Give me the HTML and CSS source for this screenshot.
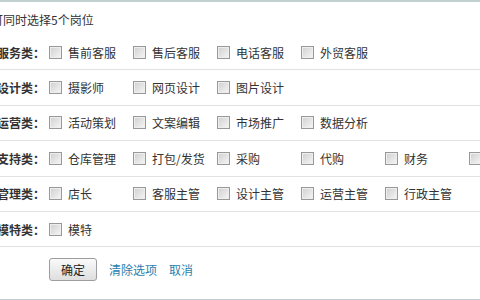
FILE: index.html
```html
<!DOCTYPE html>
<html lang="zh-CN">
<head>
	<meta charset="UTF-8">
	<title>选择岗位</title>
	<link rel="stylesheet" href="styles.css">
</head>
<body>
	<div id="box">
		<p class="tip">可同时选择5个岗位</p>
		<ul class="rows">
			<li>
				<span class="cat">服务类：</span>
				<label><input type="checkbox">售前客服</label>
				<label><input type="checkbox">售后客服</label>
				<label><input type="checkbox">电话客服</label>
				<label><input type="checkbox">外贸客服</label>
			</li>
			<li>
				<span class="cat">设计类：</span>
				<label><input type="checkbox">摄影师</label>
				<label><input type="checkbox">网页设计</label>
				<label><input type="checkbox">图片设计</label>
			</li>
			<li>
				<span class="cat">运营类：</span>
				<label><input type="checkbox">活动策划</label>
				<label><input type="checkbox">文案编辑</label>
				<label><input type="checkbox">市场推广</label>
				<label><input type="checkbox">数据分析</label>
			</li>
			<li>
				<span class="cat">支持类：</span>
				<label><input type="checkbox">仓库管理</label>
				<label><input type="checkbox">打包/发货</label>
				<label><input type="checkbox">采购</label>
				<label><input type="checkbox">代购</label>
				<label><input type="checkbox">财务</label>
				<label><input type="checkbox">其他</label>
			</li>
			<li>
				<span class="cat">管理类：</span>
				<label><input type="checkbox">店长</label>
				<label><input type="checkbox">客服主管</label>
				<label><input type="checkbox">设计主管</label>
				<label><input type="checkbox">运营主管</label>
				<label><input type="checkbox">行政主管</label>
			</li>
			<li>
				<span class="cat">模特类：</span>
				<label><input type="checkbox">模特</label>
			</li>
		</ul>
		<div class="ops">
			<input class="btn" type="button" value="确定">
			<a href="###">清除选项</a>
			<a href="###">取消</a>
		</div>
	</div>
</body>
</html>
```

FILE: styles.css
```css
*{
	margin: 0;
	padding: 0;
}
ul,li{
	list-style: none;
}
html,body{
	width: 480px;
	height: 300px;
	overflow: hidden;
	background-color: #fff;
}
body{
	font-family: "Noto Sans CJK SC", "Liberation Sans", sans-serif;
	font-size: 12px;
	color: #333;
}
#box{
	height: 297px;
	border-top: 2px solid #c3d0d0;
	border-bottom: 1px solid #c2cad6;
	overflow: hidden;
}
.tip{
	height: 33px;
	line-height: 36px;
	margin-left: -9px;
	white-space: nowrap;
}
.rows li{
	height: 34.4px;
	border-bottom: 1px solid #e2e2e2;
	display: flex;
	align-items: center;
	white-space: nowrap;
}
.cat{
	width: 52px;
	flex: none;
	margin-left: -3px;
	font-weight: bold;
}
.rows label{
	width: 84px;
	flex: none;
	display: flex;
	align-items: center;
}
.rows input{
	appearance: none;
	-webkit-appearance: none;
	width: 13px;
	height: 13px;
	margin-right: 6px;
	border: 1px solid #999;
	background: linear-gradient(135deg, #cfcfcf, #f6f6f6);
	box-shadow: inset 0 0 0 1px #eee;
}
.ops{
	height: 45px;
	padding-left: 49px;
	display: flex;
	align-items: center;
	gap: 12px;
}
.btn{
	width: 48px;
	height: 23px;
	font-family: inherit;
	font-size: 12px;
	color: #222;
	border: 1px solid #9d9d9d;
	border-radius: 3px;
	background: linear-gradient(#fafafa, #dedede);
}
.ops a{
	color: #2b7fad;
	text-decoration: none;
}
```
